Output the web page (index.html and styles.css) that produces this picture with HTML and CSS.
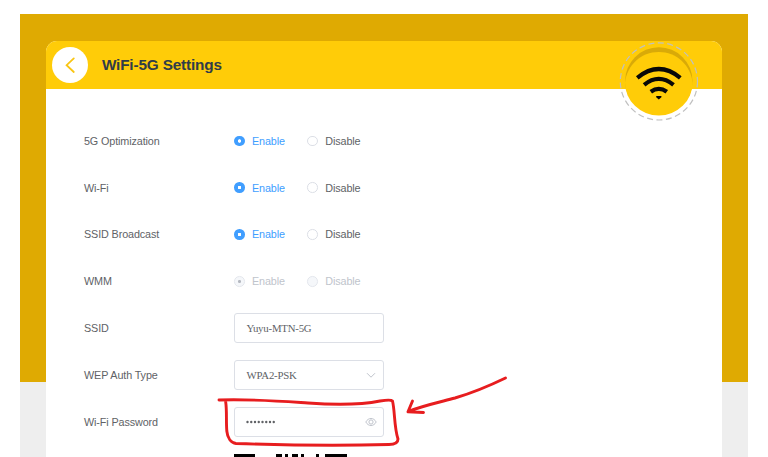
FILE: index.html
```html
<!DOCTYPE html>
<html lang="en">
<head>
<meta charset="utf-8">
<title>WiFi-5G Settings</title>
<link rel="stylesheet" href="styles.css">
</head>
<body>
<div class="page">
  <main class="card">
    <header class="header">
      <button class="back" aria-label="Back">
        <svg width="36" height="36" viewBox="0 0 36 36"><path d="M21.800 11.400 14.600 18.200 21.800 25"/></svg>
      </button>
      <h1>WiFi-5G Settings</h1>
      <svg class="badge" width="80" height="80" viewBox="0 0 80 80">
        <circle class="ring" cx="39.900" cy="40.400" r="38.600"/>
        <circle class="shade" cx="39.800" cy="40" r="33.700"/>
        <path class="disc" d="M6 41.500C8 24 22 10.900 39.800 10.900S71.600 24 73.600 41.500A33.800 33 0 0 1 6 41.500Z"/>
        <path class="wave" d="M18.300 36.800Q39.800 19.200 61.300 36.800"/>
        <path class="wave" d="M25.100 43.900Q39.800 32 54.500 43.900"/>
        <path class="wave" d="M31.800 50.800Q39.800 45 47.800 50.800"/>
        <path d="M37.200 54.900h5.200v1.300l-2.600 2.400-2.600-2.400z"/>
      </svg>
    </header>
    <form class="form">
      <div class="row"><span class="label">5G Optimization</span><label class="radio on"><i></i>Enable</label><label class="radio"><i></i>Disable</label></div>
      <div class="row"><span class="label">Wi-Fi</span><label class="radio on"><i></i>Enable</label><label class="radio"><i></i>Disable</label></div>
      <div class="row"><span class="label">SSID Broadcast</span><label class="radio on"><i></i>Enable</label><label class="radio"><i></i>Disable</label></div>
      <div class="row"><span class="label">WMM</span><label class="radio on disabled"><i></i>Enable</label><label class="radio disabled"><i></i>Disable</label></div>
      <div class="row"><span class="label">SSID</span><div class="field">Yuyu-MTN-5G</div></div>
      <div class="row"><span class="label">WEP Auth Type</span><div class="field">WPA2-PSK<svg class="icon" width="12" height="12" viewBox="0 0 12 12"><path d="M2 4.200 6 8.200 10 4.200"/></svg></div></div>
      <div class="row"><span class="label">Wi-Fi Password</span><div class="field"><svg class="dots" width="30" height="4" viewBox="0 0 30 4"><path d="M1.500 2H29"/></svg><svg class="icon" width="12" height="12" viewBox="0 0 12 12"><path d="M.8 6C3.400 1.300 8.600 1.300 11.200 6 8.600 10.700 3.400 10.700 .8 6Z"/><circle cx="6" cy="6" r="2.100"/></svg></div></div>
    </form>
    <svg class="qr" width="113" height="3" viewBox="0 0 113 3"><path d="M0 0h21v3H0zM42 0h6v3h-6zM51 0h3v3h-3zM58 0h6v3h-6zM67 0h3v3h-3zM82 0h3v3h-3zM91 0h22v3H91z"/></svg>
  </main>
</div>
<svg class="marks" width="768" height="457" viewBox="0 0 768 457">
  <path d="M219 400C255 399 279 401 308 403S365 404 380 401C387 400 391 399.500 392.500 401C395 411 394 427 398 439C398 443 394 444.500 389 444.500C335 446 280 445 236 443.500C231 443 227.500 438 226.800 431C226 420 227 411 225.700 402"/>
  <path d="M505.500 378C490 385.500 472 393 455 398C438 402.500 422 406 408 411.500M412.500 401 408 411.800 423.500 412.500"/>
</svg>
</body>
</html>
```
FILE: styles.css
```css
* { box-sizing: border-box; }
body {
  margin: 0;
  height: 457px;
  overflow: hidden;
  background: #fff;
  font: 10.8px/16px "Liberation Sans", Arial, sans-serif;
  letter-spacing: -.12px;
  color: #606266;
}
.page {
  height: 443px;
  margin: 14px 20px 0;
  padding: 26.500px 26.400px 0;
  background: linear-gradient(#dfaa02 368px, #eee 368px);
}
.card {
  height: 416.500px;
  overflow: hidden;
  border-radius: 11px 11px 0 0;
  background: #fff;
}
.header {
  position: relative;
  display: flex;
  align-items: center;
  height: 48px;
  padding-left: 6px;
  background: #ffcc08;
}
.back {
  width: 36px;
  height: 36px;
  padding: 0;
  border: 0;
  border-radius: 50%;
  background: #fff;
}
.back svg { display: block; }
.back path { fill: none; stroke: #f9c513; stroke-width: 1.800; stroke-linecap: round; }
h1 { margin: 0 0 0 13.500px; font-size: 15.300px; line-height: 20px; letter-spacing: -.14px; color: #303c48; }
.badge { position: absolute; top: .7px; right: 23px; }
.ring { fill: none; stroke: #c0c0c0; stroke-width: 1.200; stroke-dasharray: 6 3.500; }
.shade { fill: #d9aa08; }
.disc { fill: #ffcc08; }
.wave { fill: none; stroke: #080808; stroke-width: 4.200; }
.form { padding: 28.900px 0 0 37.600px; }
.row { display: flex; align-items: center; height: 46.830px; }
.label { width: 150px; }
.radio { display: flex; align-items: center; width: 73.300px; }
.radio i {
  width: 10.600px;
  height: 10.600px;
  margin-right: 7.400px;
  border: 1px solid #dcdfe6;
  border-radius: 50%;
}
.radio.on { color: #409eff; }
.radio.on i { border: 0; background: radial-gradient(circle, #fff 1.400px, #409eff 2px); }
.radio.disabled { color: #c0c4cc; }
.radio.disabled i { border: 1px solid #e4e7ed; background: #f5f7fa; }
.radio.on.disabled i { background: radial-gradient(circle, #b4b8c0 1.200px, #f5f7fa 1.800px); }
.field {
  display: flex;
  align-items: center;
  justify-content: space-between;
  width: 150px;
  height: 30px;
  padding: 0 6px 0 11.500px;
  border: 1px solid #dcdfe6;
  border-radius: 3px;
  font-family: "Liberation Serif", "Times New Roman", serif;
  letter-spacing: -.2px;
}
.icon { fill: none; stroke: #c0c4cc; stroke-width: 1; }
.dots { fill: none; stroke: #606266; stroke-width: 2.400; stroke-linecap: round; stroke-dasharray: 0 3.750; }
.qr { display: block; margin: 8.600px 0 0 187.600px; }
.marks { position: absolute; inset: 0; pointer-events: none; fill: none; stroke: #e71d1f; stroke-width: 2.900; stroke-linecap: round; stroke-linejoin: round; }
```
